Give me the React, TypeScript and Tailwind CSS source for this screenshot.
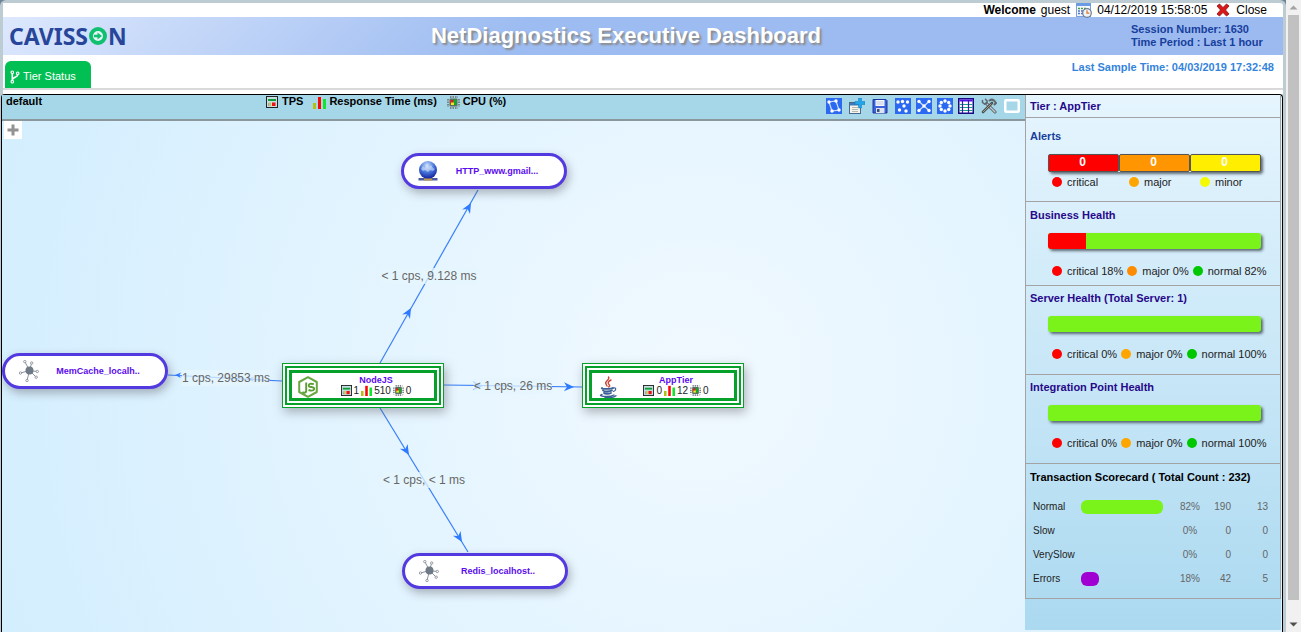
import React from "react";

type IconProps = { className?: string };

const TpsIcon = ({ className = "size-[12px]" }: IconProps) => (
  <svg viewBox="0 0 12 12" className={className} aria-hidden="true">
    <rect x="0.5" y="0.5" width="11" height="11" fill="#c6dde1" stroke="#222" />
    <rect x="2" y="3" width="8" height="2" fill="#0e9d37" />
    <rect x="2" y="7" width="1.500" height="3" fill="#a9a9a9" />
    <rect x="3.500" y="6.500" width="1.500" height="3.500" fill="#cdc03a" />
    <rect x="6" y="6.500" width="3.500" height="3.500" fill="#ee1111" />
  </svg>
);

const BarsIcon = ({ className = "size-[13px]" }: IconProps) => (
  <svg viewBox="0 0 13 13" className={className} aria-hidden="true">
    <rect x="0" y="7" width="3" height="6" fill="#b5bf12" />
    <rect x="5" y="1" width="3" height="12" fill="#fb0505" />
    <rect x="10" y="3" width="3" height="10" fill="#12e62c" />
  </svg>
);

const ChipIcon = ({ className = "size-[13px]" }: IconProps) => (
  <svg viewBox="0 0 13 13" className={className} aria-hidden="true">
    <path d="M3 1h8M3 12h8M1 3v8M12 3v8" stroke="#76868a" strokeWidth="2" strokeDasharray="1.500 1" />
    <rect x="2.500" y="2.500" width="8" height="8" rx="1" fill="#5c6f62" />
    <rect x="3.500" y="4" width="3" height="3.500" fill="#ee1414" />
    <rect x="6.500" y="3.500" width="3" height="5.500" fill="#14a52c" />
    <rect x="4" y="6.500" width="3" height="2.500" fill="#f3e61a" />
  </svg>
);

const CalendarIcon = () => (
  <svg viewBox="0 0 16 16" className="size-4" aria-hidden="true">
    <rect x="0.500" y="1.500" width="14" height="13" fill="#f4f8fe" stroke="#7ba2da" />
    <rect x="0" y="1" width="15" height="3" fill="#6b9be3" />
    <path d="M2 6.500h2M5 6.500h2M8 6.500h2" stroke="#45a045" strokeWidth="1.500" />
    <path d="M2 9h2M5 9h2M2 11.500h2M5 11.500h2" stroke="#5576cb" strokeWidth="1.500" />
    <circle cx="11" cy="11" r="4.300" fill="#eef4fb" stroke="#6e7c93" strokeWidth="1.200" />
    <path d="M11 8.300V11.200H13.300" fill="none" stroke="#e1731d" strokeWidth="1.200" />
  </svg>
);

const CloseIcon = () => (
  <svg viewBox="0 0 14 14" className="size-[14px]" aria-hidden="true">
    <path d="M1 3 3.500 1 7 4.500 10.500 1 13 3 9.500 7 13 11 10.500 13 7 9.500 3.500 13 1 11 4.500 7z" fill="#d81818" stroke="#8e0c0c" strokeWidth="0.800" />
  </svg>
);

const BranchIcon = () => (
  <svg viewBox="0 0 10 14" className="h-[14px] w-[10px]" fill="none" stroke="#fff" strokeWidth="1.100" aria-hidden="true">
    <circle cx="2.300" cy="2.300" r="1.300" />
    <circle cx="7.700" cy="3.300" r="1.300" />
    <circle cx="2.300" cy="11.700" r="1.300" />
    <path d="M2.300 3.700v6.600M7.700 4.700c0 3-5.400 2-5.400 5.300" strokeWidth="1.600" />
  </svg>
);

type Dot = [number, number];

const BlueTile = ({ dots, lines }: { dots: Dot[]; lines?: string }) => (
  <svg viewBox="0 0 16 16" className="size-4" aria-hidden="true">
    <rect width="16" height="16" fill="#2b69f2" />
    {lines && <path d={lines} fill="none" stroke="#cfe0ff" strokeWidth="1.200" />}
    {dots.map(([x, y]) => (
      <circle key={`${x}-${y}`} cx={x} cy={y} r="1.700" fill="#fff" />
    ))}
  </svg>
);

const AddWindowIcon = () => (
  <svg viewBox="0 0 16 16" className="size-4" aria-hidden="true">
    <rect x="0.500" y="4.500" width="11" height="11" fill="#f6f4ea" stroke="#48698f" />
    <rect x="1" y="5" width="10" height="2.500" fill="#3f79b8" />
    <path d="M3 9.500h6M3 11.500h6M3 13.500h6" stroke="#b3b9b4" />
    <path d="M9.500 0h3v3.500H16v3h-3.500V10h-3V6.500H6v-3h3.500z" fill="#21a6ea" stroke="#1277bd" strokeWidth="0.500" />
  </svg>
);

const SaveIcon = () => (
  <svg viewBox="0 0 16 16" className="size-4" aria-hidden="true">
    <path d="M1 1.500h13l1 1V15H1z" fill="#3b62dc" stroke="#1b379f" />
    <rect x="3.500" y="2" width="9" height="6" fill="#f4f7ff" />
    <path d="M4.500 4h7M4.500 6h7" stroke="#a9b2ca" strokeWidth="0.700" />
    <rect x="4" y="10" width="8.500" height="5" fill="#dde2ee" />
    <rect x="5" y="11" width="2.500" height="3" fill="#3d4e7e" />
  </svg>
);

const TableIcon = () => (
  <svg viewBox="0 0 16 16" className="size-4" aria-hidden="true">
    <rect x="0.750" y="0.750" width="14.500" height="14.500" fill="#fff" stroke="#190b86" strokeWidth="1.500" />
    <rect x="1.500" y="1.500" width="13" height="2" fill="#5914e8" />
    <path d="M1.500 6.500h13M1.500 9.500h13M1.500 12.500h13" stroke="#1e9e88" />
    <path d="M4.500 2v13M10.500 2v13" stroke="#3a16b8" strokeWidth="1.200" />
  </svg>
);

const ToolsIcon = () => (
  <svg viewBox="0 0 16 16" className="size-4" fill="none" strokeLinecap="round" aria-hidden="true">
    <path d="M5.500 5.500 14 14" stroke="#4d565c" strokeWidth="3" />
    <path d="M5.500 5.500 14 14" stroke="#c3ced3" strokeWidth="1.400" />
    <path d="M1.500 2.500v2l2.200 1.700 2-0.700.5-2.200L4.500 1.200" stroke="#5d676e" strokeWidth="1.500" />
    <path d="M11 5 2 14" stroke="#4c5256" strokeWidth="2.600" />
    <path d="M10 6 2.200 13.800" stroke="#a99a80" strokeWidth="1" />
    <path d="M8.500 2.500c2-1.500 3.500-.8 4.500 0l2 2.500-1.500 1.500" stroke="#5d676e" strokeWidth="2" />
  </svg>
);

const FrameIcon = () => (
  <svg viewBox="0 0 16 16" className="size-4" aria-hidden="true">
    <rect x="1.250" y="2.250" width="13.500" height="11.500" rx="1" fill="#a5d7e9" stroke="#fff" strokeWidth="2.500" />
  </svg>
);

const GlobeIcon = () => (
  <svg viewBox="0 0 20 20" className="size-5" aria-hidden="true">
    <defs>
      <radialGradient id="globe" cx="0.45" cy="0.25" r="0.75">
        <stop offset="0" stopColor="#cfe3fb" />
        <stop offset="0.5" stopColor="#4a78dc" />
        <stop offset="1" stopColor="#101e9c" />
      </radialGradient>
    </defs>
    <path d="M0.500 17h6l2-1h4l2 1h5v2.500h-19z" fill="#4c5b9d" />
    <circle cx="10" cy="9" r="9" fill="url(#globe)" />
    <path d="M6 17.500h8v2H6z" fill="#c09a4c" />
    <path d="M3 8l2-3 2 2 2-4 2 3 2-2 2 3 2 1-2 2-3-1-2 2-3-2-2 1z" fill="#d9e8fb" opacity="0.550" />
  </svg>
);

const HubIcon = () => (
  <svg viewBox="0 0 20 22" className="h-[22px] w-5" fill="none" stroke="#8b929b" aria-hidden="true">
    <path d="M10.500 10.500 6 2M10.500 10.500 12.500 3.500M10.500 10.500 1.500 13M10.500 10.500 18 11.500M10.500 10.500 17 17M10.500 10.500 8 20.500" />
    <g fill="#fff" strokeWidth="0.900">
      <circle cx="5.800" cy="1.600" r="1.200" />
      <circle cx="12.700" cy="3" r="1.200" />
      <circle cx="1.500" cy="13" r="1.200" />
      <circle cx="18.300" cy="11.500" r="1.200" />
      <circle cx="17.200" cy="17.200" r="1.200" />
      <circle cx="8" cy="20.500" r="1.200" />
    </g>
    <circle cx="10.500" cy="10.500" r="4" fill="#6f7a87" stroke="none" />
  </svg>
);

const NodeJsIcon = () => (
  <svg viewBox="0 0 20 22" className="h-[22px] w-5" fill="none" stroke="#5a9e34" strokeLinejoin="round" aria-hidden="true">
    <path d="M10 1.200 18.800 6v10L10 20.800 1.200 16V6z" stroke="#67a842" strokeWidth="2" />
    <path d="M8.200 6.500v8.300q0 2-2 2l-1.800-.8" strokeWidth="1.900" />
    <path d="M15.800 8.200q-5-1.200-5 1t2.700 1.800q3 .4 2.600 2.400-.8 2-5.600.6" strokeWidth="1.900" />
  </svg>
);

const JavaIcon = () => (
  <svg viewBox="0 0 20 22" className="h-[22px] w-5" fill="none" strokeLinecap="round" aria-hidden="true">
    <path d="M10.500 1c2 3-4.500 4-2.500 7l1 2M13 4c-3 1.500-3.500 3-2 4.500s.3 2-.5 2.500" stroke="#cc4437" strokeWidth="1.400" />
    <path d="M4 12c-2 1 9 1.500 11 0M5 14.500c1 1.300 7 1.300 9 0M6 17c1 1 5 1 7 0" stroke="#3b5f97" strokeWidth="1.800" />
    <path d="M15.500 12c3-1 3 2.500 0 3.500" stroke="#3b5f97" strokeWidth="1.200" />
    <path d="M4 18.500c-6 2 8 3 12 .5M7 21.300c4 .6 9 0 11-1.500" stroke="#3b5f97" strokeWidth="1.400" />
  </svg>
);

const layouts: { label: string; icon: React.ReactNode }[] = [
  { label: "Random layout", icon: <BlueTile dots={[[3, 4], [7.500, 3.500], [12.5, 4], [9, 8], [4.500, 12], [11, 13]]} /> },
  { label: "Star layout", icon: <BlueTile dots={[[3, 3.500], [13, 3.500], [8, 8], [3, 12.500], [13, 12.500]]} lines="M3 3.500 13 12.500M13 3.500 3 12.500" /> },
  { label: "Circle layout", icon: <BlueTile dots={[[8, 3], [11.700, 4.500], [13, 8], [11.700, 11.500], [8, 13], [4.300, 11.500], [3, 8], [4.300, 4.500]]} /> },
  { label: "Table view", icon: <TableIcon /> },
];

const IconButton = ({ label, children }: { label: string; children: React.ReactNode }) => (
  <button type="button" aria-label={label} className="block size-4">
    {children}
  </button>
);

const Pill = ({ className, icon, name }: { className: string; icon: React.ReactNode; name: string }) => (
  <div className={`absolute flex h-9 w-[166px] items-center rounded-full border-[3px] border-[#5339e0] bg-white pr-2 pl-[14px] shadow-[2px_4px_10px_rgba(90,90,100,0.45)] ${className}`}>
    {icon}
    <span className="flex-1 text-center text-[9px] leading-3 font-bold text-[#5b0bf0]">{name}</span>
  </div>
);

type TierProps = { className: string; icon: React.ReactNode; name: string; tps: string; response: string; cpu: string };

const Tier = ({ className, icon, name, tps, response, cpu }: TierProps) => (
  <div className={`absolute w-[162px] border border-[#06a12a] bg-white p-[2px] shadow-[2px_4px_10px_rgba(90,90,100,0.45)] ${className}`}>
    <div className="border-2 border-[#06a12a] p-[2px]">
      <div className="flex h-[31px] items-center border-[3px] border-[#06a12a] pl-[6px]">
        <span className="pt-[2px]">{icon}</span>
        <div className="flex-1 text-center">
          <div className="text-[9px] leading-[10px] font-bold text-[#5b0bf0]">{name}</div>
          <div className="flex items-center justify-center gap-[2px] text-[10px] leading-[11px] text-[#222]">
            <TpsIcon className="size-[11px]" />
            {tps}
            <BarsIcon className="size-[11px]" />
            {response}
            <ChipIcon className="size-[11px]" />
            {cpu}
          </div>
        </div>
      </div>
    </div>
  </div>
);

const edges = [
  { d: "M378 242 476 69", arrows: ["translate(469 82) rotate(-60.500)", "translate(409 187) rotate(-60.500)"] },
  { d: "M378 287 466 431", arrows: ["translate(407 334) rotate(58.500)", "translate(460 421) rotate(58.500)"] },
  { d: "M442 264 580 266", arrows: ["translate(572 266) rotate(1)", "translate(481 265) rotate(1)"] },
  { d: "M280 260 166 254", arrows: ["translate(173 254) rotate(183) scale(0.600)", "translate(246 258) rotate(183) scale(0.600)"] },
];

const EdgeLabel = ({ className, children }: { className: string; children: React.ReactNode }) => (
  <span className={`absolute -translate-x-1/2 bg-[#e6f5fe]/75 text-[12px] leading-4 whitespace-nowrap text-[#666] ${className}`}>{children}</span>
);

const Topology = () => (
  <div className="relative flex-1 overflow-hidden bg-[radial-gradient(circle_at_68%_50%,#f1f9ff,#e2f4ff_50%,#d3eefe)]">
    <svg viewBox="0 0 1023 511" className="absolute top-0 left-0 h-[511px] w-[1023px]" aria-hidden="true">
      {edges.map((edge) => (
        <g key={edge.d}>
          <path d={edge.d} stroke="#3a80fa" strokeWidth="1.200" />
          {edge.arrows.map((arrow) => (
            <path key={arrow} d="M0 0-10-4.500-7 0-10 4.500z" transform={arrow} fill="#2f7bff" />
          ))}
        </g>
      ))}
    </svg>
    <EdgeLabel className="top-[147px] left-[427px]">&lt; 1 cps, 9.128 ms</EdgeLabel>
    <EdgeLabel className="top-[351px] left-[422px]">&lt; 1 cps, &lt; 1 ms</EdgeLabel>
    <EdgeLabel className="top-[257px] left-[511px]">&lt; 1 cps, 26 ms</EdgeLabel>
    <EdgeLabel className="top-[249px] left-[224px]">1 cps, 29853 ms</EdgeLabel>
    <Pill className="top-8 left-[399px]" icon={<GlobeIcon />} name="HTTP_www.gmail..." />
    <Pill className="top-[232px] left-0" icon={<HubIcon />} name="MemCache_localh.." />
    <Pill className="top-[432px] left-[400px]" icon={<HubIcon />} name="Redis_localhost.." />
    <Tier className="top-[242px] left-[280px]" icon={<NodeJsIcon />} name="NodeJS" tps="1" response="510" cpu="0" />
    <Tier className="top-[242px] left-[580px]" icon={<JavaIcon />} name="AppTier" tps="0" response="12" cpu="0" />
    <button type="button" aria-label="Expand" className="absolute top-0 left-[2px] flex size-[18px] items-center justify-center bg-white">
      <svg viewBox="0 0 12 12" className="size-3" aria-hidden="true">
        <path d="M6 0.500v11M0.500 6h11" stroke="#929292" strokeWidth="3" />
      </svg>
    </button>
  </div>
);

const LegendItem = ({ dot, children }: { dot: string; children: React.ReactNode }) => (
  <span className="flex items-center gap-[5px] whitespace-nowrap">
    <span className={`size-[10px] rounded-full ${dot}`} />
    {children}
  </span>
);

type HealthProps = { title: string; critical: number; major: number; normal: number; majorDot: string; className: string };

const Health = ({ title, critical, major, normal, majorDot, className }: HealthProps) => (
  <section className={`border-b border-[#a3a3a3] pl-1 ${className}`}>
    <h2 className="font-bold text-[#27088a]">{title}</h2>
    <div className="mt-[10px] mr-[19px] ml-[18px] flex h-4 overflow-hidden rounded-[3px] bg-[#7af31a] shadow-[2px_2px_3px_rgba(50,60,70,0.75)]">
      <div className="bg-[#ff0000]" style={{ width: `${critical}%` }} />
    </div>
    <div className="mt-[14px] ml-[22px] flex gap-1 text-[#222]">
      <LegendItem dot="bg-[#ff0000]">critical {critical}%</LegendItem>
      <LegendItem dot={majorDot}>major {major}%</LegendItem>
      <LegendItem dot="bg-[#00c800]">normal {normal}%</LegendItem>
    </div>
  </section>
);

const scorecard = [
  { name: "Normal", percent: 82, count: 190, tps: 13, bar: "bg-[#7af31a]" },
  { name: "Slow", percent: 0, count: 0, tps: 0, bar: "" },
  { name: "VerySlow", percent: 0, count: 0, tps: 0, bar: "" },
  { name: "Errors", percent: 18, count: 42, tps: 5, bar: "bg-[#a000d2]" },
];

const alertCells = [
  { name: "critical", cell: "bg-[#ff0000]" },
  { name: "major", cell: "bg-[#ff9500]" },
  { name: "minor", cell: "bg-[#ffee00]" },
];

const TierDetails = () => (
  <aside className="mr-px mb-[2px] w-64 shrink-0 bg-linear-to-b from-[#e6f5fe] to-[#abd9f0] text-[11px] leading-4">
    <div className="border border-t-0 border-[#a3a3a3]">
      <h2 className="border-b border-[#a3a3a3] pt-[3px] pb-[3px] pl-1 font-bold text-[#27088a]">Tier : AppTier</h2>
      <section className="border-b border-[#a3a3a3] pt-[10px] pb-[11px] pl-1">
        <h2 className="font-bold text-[#173f9c]">Alerts</h2>
        <div className="mt-[10px] mr-[19px] ml-[18px] grid grid-cols-3 rounded-[3px] shadow-[2px_2px_3px_rgba(50,60,70,0.75)]">
          {alertCells.map(({ name, cell }) => (
            <div key={name} className={`h-[18px] rounded-[2px] border border-[#555] pr-[2px] text-center text-[12px] leading-[15px] font-bold text-white ${cell}`}>
              0
            </div>
          ))}
        </div>
        <div className="mt-[2px] ml-[22px] flex text-[#222]">
          <div className="w-[77px]"><LegendItem dot="bg-[#ff0000]">critical</LegendItem></div>
          <div className="w-[71px]"><LegendItem dot="bg-[#ffa500]">major</LegendItem></div>
          <LegendItem dot="bg-[#f5fa00]">minor</LegendItem>
        </div>
      </section>
      <Health title="Business Health" critical={18} major={0} normal={82} majorDot="bg-[#ff8c00]" className="pt-[5px] pb-[6px]" />
      <Health title="Server Health (Total Server: 1)" critical={0} major={0} normal={100} majorDot="bg-[#ffa500]" className="pt-1 pb-3" />
      <Health title="Integration Point Health" critical={0} major={0} normal={100} majorDot="bg-[#ffa500]" className="pt-1 pb-3" />
      <section className="pt-[5px] pb-[7px]">
        <h2 className="pl-1 font-bold text-black">Transaction Scorecard ( Total Count : 232)</h2>
        <table className="mt-[10px] table-fixed text-[10px]">
          <tbody>
            {scorecard.map((row) => (
              <tr key={row.name} className="h-6 text-[#666]">
                <th scope="row" className="w-[55px] p-0 pl-[7px] text-left font-normal text-[#222]">{row.name}</th>
                <td className="w-[90px] p-0">
                  {row.percent > 0 && <div className={`h-[14px] rounded-[6px] ${row.bar}`} style={{ width: `${row.percent}px` }} />}
                </td>
                <td className="w-[38px] p-0 text-center">{row.percent}%</td>
                <td className="w-[22px] p-0 text-right">{row.count}</td>
                <td className="w-[37px] p-0 text-right">{row.tps}</td>
              </tr>
            ))}
          </tbody>
        </table>
      </section>
    </div>
  </aside>
);

const Toolbar = () => (
  <div className="flex h-[26px] border-b-2 border-[#8a989e] bg-[#a5d7e9] pr-[5px] pl-1 text-[11px] leading-3 font-bold text-black">
    <div className="w-[260px]">default</div>
    <div className="flex flex-1 items-start gap-[10px] whitespace-nowrap">
      <span className="flex gap-1"><TpsIcon className="mt-[1px] size-[12px]" />TPS</span>
      <span className="flex gap-[3px]"><BarsIcon className="mt-[1px] size-[13px]" />Response Time (ms)</span>
      <span className="flex gap-[3px]"><ChipIcon className="mt-[1px] size-[13px]" />CPU (%)</span>
    </div>
    <div className="flex items-center gap-[7px] pb-[2px]">
      <IconButton label="Edit topology">
        <BlueTile dots={[[3, 4], [10, 3], [13, 12], [6, 13]]} lines="M3 4 10 3 13 12 6 13z" />
      </IconButton>
      <IconButton label="Add view"><AddWindowIcon /></IconButton>
      <IconButton label="Save"><SaveIcon /></IconButton>
      <div className="flex gap-[5px]">
        {layouts.map((item) => <IconButton key={item.label} label={item.label}>{item.icon}</IconButton>)}
      </div>
      <IconButton label="Settings"><ToolsIcon /></IconButton>
      <IconButton label="Full screen"><FrameIcon /></IconButton>
    </div>
  </div>
);

const Logo = () => (
  <div className="flex w-[118px] items-center gap-px pl-[6px] font-['Noto_Sans',sans-serif] text-[23px] leading-[38px] font-bold text-[#27469a]">
    CAVISS
    <svg viewBox="0 0 18 18" className="size-[18px] shrink-0" aria-hidden="true">
      <circle cx="9" cy="9" r="7" fill="#e8f4f6" stroke="#0fc070" strokeWidth="4" />
      <path d="M5 9h5" stroke="#0fc070" strokeWidth="2.500" />
      <path d="M8.500 5.500 13 9 8.500 12.500z" fill="#0fc070" />
    </svg>
    N
  </div>
);

const Scrollbar = () => (
  <div className="flex w-[15px] shrink-0 flex-col items-center bg-[#f1f1f1]" aria-hidden="true">
    <svg viewBox="0 0 15 15" className="size-[15px] shrink-0"><path d="M3.500 9.500 7.500 5.500 11.500 9.500z" fill="#a3a3a3" /></svg>
    <div className="w-[11px] flex-1 bg-[#c1c1c1]" />
    <div className="h-[17px]" />
    <svg viewBox="0 0 15 15" className="size-[15px] shrink-0"><path d="M3.500 5.500 7.500 9.500 11.500 5.500z" fill="#505050" /></svg>
  </div>
);

export default function App() {
  return (
    <div className="flex min-h-screen bg-[#6d8591] font-['Liberation_Sans',Arial,sans-serif]">
      <div className="flex min-w-0 flex-1 flex-col rounded-t-[6px] bg-[#bdcbd2] pt-[3px] pr-[3px] pl-px">
        <header className="ml-[2px] rounded-tr-[3px] bg-white">
          <div className="flex h-[14px] items-center justify-end pr-4 text-[12px] leading-[14px] text-black">
            <strong>Welcome</strong>
            <span className="ml-[5px]">guest</span>
            <span className="mr-[5px] ml-[6px]"><CalendarIcon /></span>
            <time>04/12/2019 15:58:05</time>
            <button type="button" className="ml-[9px] flex items-center gap-[6px]">
              <CloseIcon />
              Close
            </button>
          </div>
          <div className="flex h-[38px] items-center bg-[linear-gradient(135deg,#dde8fd,#9dbcf1_40%,#9cbaf0)]">
            <Logo />
            <h1 className="flex-1 text-center text-[22px] leading-[38px] font-bold text-white [text-shadow:2px_2px_2px_#8a8a8a]">
              NetDiagnostics Executive Dashboard
            </h1>
            <div className="w-[152px] text-[11px] leading-[13px] font-bold text-[#173f9c]">
              <p>Session Number: 1630</p>
              <p>Time Period : Last 1 hour</p>
            </div>
          </div>
          <div className="flex items-end justify-between border-b-2 border-[#d9d9d9] pt-[6px] pl-[2px]">
            <button type="button" className="flex h-[27px] w-[86px] items-center gap-[3px] rounded-t-[6px] bg-[#02bf53] pt-1 pl-[5px] text-[11px] whitespace-nowrap text-white">
              <BranchIcon />
              Tier Status
            </button>
            <p className="self-start pr-[9px] text-[11px] leading-3 font-bold text-[#3484dc]">Last Sample Time: 04/03/2019 17:32:48</p>
          </div>
          <div className="h-1" />
        </header>
        <main className="flex flex-1 rounded-t-[4px] border-t border-r border-l border-black bg-[#dff3fe]">
          <div className="flex min-w-0 flex-1 flex-col">
            <Toolbar />
            <Topology />
          </div>
          <TierDetails />
        </main>
      </div>
      <Scrollbar />
    </div>
  );
}
